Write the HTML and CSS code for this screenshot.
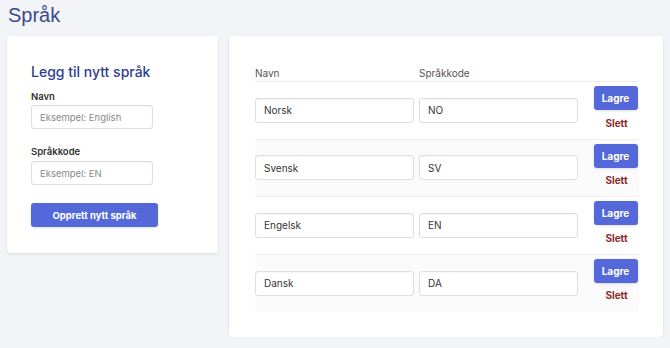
FILE: index.html
```html
<!DOCTYPE html>
<html lang="no">

<head>
    <meta charset="UTF-8">
    <meta name="viewport" content="width=device-width, initial-scale=1.0">
    <title>Språk</title>
    <link rel="stylesheet" href="styles.css">
</head>

<body>
    <h1 class="title">Språk</h1>

    <div class="layout">
        <div class="card new-card">
            <h2>Legg til nytt språk</h2>
            <label for="nyNavn">Navn</label>
            <input type="text" id="nyNavn" placeholder="Eksempel: English">
            <label for="nyKode">Språkkode</label>
            <input type="text" id="nyKode" placeholder="Eksempel: EN">
            <button class="btn btn-create">Opprett nytt språk</button>
        </div>

        <div class="card list-card">
            <div class="row head">
                <div>Navn</div>
                <div>Språkkode</div>
                <div></div>
            </div>
            <div class="row">
                <div><input type="text" value="Norsk"></div>
                <div><input type="text" value="NO"></div>
                <div class="actions">
                    <button class="btn">Lagre</button>
                    <a href="#" class="delete">Slett</a>
                </div>
            </div>
            <div class="row">
                <div><input type="text" value="Svensk"></div>
                <div><input type="text" value="SV"></div>
                <div class="actions">
                    <button class="btn">Lagre</button>
                    <a href="#" class="delete">Slett</a>
                </div>
            </div>
            <div class="row">
                <div><input type="text" value="Engelsk"></div>
                <div><input type="text" value="EN"></div>
                <div class="actions">
                    <button class="btn">Lagre</button>
                    <a href="#" class="delete">Slett</a>
                </div>
            </div>
            <div class="row">
                <div><input type="text" value="Dansk"></div>
                <div><input type="text" value="DA"></div>
                <div class="actions">
                    <button class="btn">Lagre</button>
                    <a href="#" class="delete">Slett</a>
                </div>
            </div>
        </div>
    </div>
</body>

</html>
```

FILE: styles.css
```css
* {
    margin: 0;
    padding: 0;
    box-sizing: border-box;
}

body {
    background: #f2f4f8;
    font-family: 'Inter', 'Liberation Sans', sans-serif;
    color: #333;
    padding: 0 7px;
}

.title {
    font-family: 'Liberation Sans', Arial, sans-serif;
    font-weight: normal;
    font-size: 20px;
    line-height: 30px;
    color: #3b4a8f;
    padding-left: 1px;
    margin-bottom: 6px;
}

.layout {
    display: grid;
    grid-template-columns: 211px 1fr;
    gap: 11px;
    align-items: start;
}

.card {
    background: #ffffff;
    border-radius: 3px;
    box-shadow: 0 1px 3px rgba(0, 0, 0, 0.1);
}

.new-card {
    padding: 26px 24px 26px;
    display: flex;
    flex-direction: column;
    align-items: flex-start;
}

.new-card h2 {
    font-size: 14px;
    font-weight: 500;
    color: #2f3e8e;
    line-height: 20px;
    margin-bottom: 9px;
}

.new-card label {
    font-size: 9.5px;
    font-weight: 600;
    color: #333;
    line-height: 12px;
    margin-bottom: 2px;
}

.new-card label + input + label {
    margin-bottom: 3px;
}

.new-card input {
    width: 122px;
    margin-bottom: 17px;
}

input {
    display: block;
    height: 25px;
    border: 1px solid #dedede;
    border-radius: 3px;
    padding: 0 8px;
    font-family: inherit;
    font-size: 10px;
    color: #333;
    box-shadow: inset 0 1px 2px rgba(0, 0, 0, 0.04);
}

.new-card input {
    height: 24px;
    font-size: 9.5px;
}

input::placeholder {
    color: #8a8a8a;
}

.btn {
    background: #5468d9;
    color: #ffffff;
    border: none;
    border-radius: 3px;
    height: 24px;
    padding: 0 8px;
    font-family: inherit;
    font-size: 9.5px;
    font-weight: 700;
    cursor: pointer;
    box-shadow: 0 1px 3px rgba(0, 0, 0, 0.12);
}

.btn-create {
    width: 127px;
    margin-top: 1px;
}

.list-card {
    padding: 26px 24px 25px 26px;
}

.row {
    display: grid;
    grid-template-columns: 164px 164px 1fr;
    align-items: center;
    border-bottom: 1px solid #eeeeef;
    height: 57.5px;
}

.row:nth-child(odd) {
    background: #fbfbfc;
}

.row:last-child {
    border-bottom: none;
}

.row.head {
    height: 20px;
    padding-top: 4px;
    align-items: start;
    background: none;
    font-size: 10px;
    line-height: 14px;
    color: #555;
    border-bottom-color: #ececec;
}

.row input {
    width: 159px;
}

.actions {
    display: flex;
    flex-direction: column;
    align-items: center;
    padding-left: 9px;
    align-self: start;
    padding-top: 4px;
}

.actions .btn {
    width: 44px;
    padding: 0;
    font-size: 10px;
}

.delete {
    font-size: 10px;
    font-weight: 700;
    color: #8b2b2b;
    text-decoration: none;
    line-height: 14px;
    margin-top: 5.5px;
    padding-left: 2px;
}
```
